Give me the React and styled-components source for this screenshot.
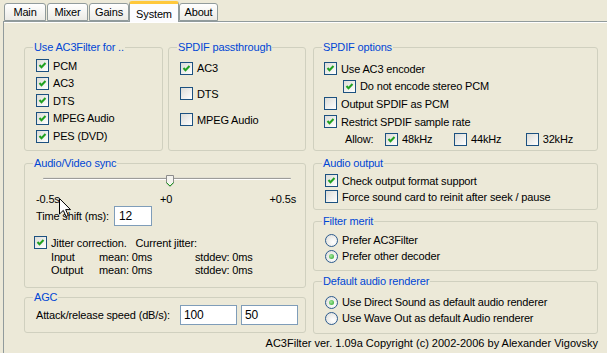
import React from "react";
import styled, { createGlobalStyle } from "styled-components";

const GlobalStyle = createGlobalStyle`
  html, body {
    margin: 0;
    padding: 0;
    background: #ece9d8;
  }
  body {
    font-family: "Liberation Sans", Arial, sans-serif;
    font-size: 11px;
    letter-spacing: -0.15px;
    color: #000;
  }
`;

const Window = styled.div`
  position: relative;
  width: 607px;
  height: 353px;
  overflow: hidden;
  box-sizing: border-box;
  padding-top: 1px;
  display: flex;
  flex-direction: column;
`;

const TabRow = styled.div`
  position: relative;
  z-index: 2;
  display: flex;
  align-items: flex-end;
  gap: 1px;
  height: 20px;
  padding-left: 4px;
`;

const Tab = styled.div`
  box-sizing: border-box;
  width: ${(p) => p.$w}px;
  height: ${(p) => (p.$active ? 21 : 18)}px;
  margin: ${(p) => (p.$active ? "0 -1px -1px" : "0")};
  display: flex;
  align-items: center;
  justify-content: center;
  padding-top: ${(p) => (p.$active ? 1 : 0)}px;
  border: 1px solid #919b9c;
  border-bottom: ${(p) => (p.$active ? "none" : "1px solid #919b9c")};
  border-top: ${(p) => (p.$active ? "3px solid #ffc83c" : "1px solid #919b9c")};
  border-radius: 3px 3px 0 0;
  background: ${(p) =>
    p.$active ? "#fcfcfe" : "linear-gradient(#ffffff, #ecebe6)"};
  white-space: nowrap;
`;

const Panel = styled.div`
  flex: 1;
  margin-left: 3px;
  border-left: 1px solid #919b9c;
  border-top: 1px solid #919b9c;
  box-shadow: inset 0 1px 0 #ffffff;
  padding: 25px 0 0 20px;
  background: #ece9d8;
`;

const Columns = styled.div`
  display: grid;
  grid-template-columns: 282px 285px;
  column-gap: 7px;
  align-items: start;
`;

const Column = styled.div`
  display: flex;
  flex-direction: column;
`;

const TopRow = styled.div`
  display: flex;
  gap: 5px;
`;

const Group = styled.div`
  position: relative;
  box-sizing: border-box;
  width: ${(p) => (p.$w ? `${p.$w}px` : "auto")};
  height: ${(p) => p.$h}px;
  margin-top: ${(p) => p.$mt || 0}px;
  padding: ${(p) => p.$pad};
  border: 1px solid #d0d0bf;
  border-radius: 3px;
  display: flex;
  flex-direction: column;
  gap: ${(p) => p.$gap || 0}px;
`;

const Legend = styled.span`
  position: absolute;
  top: -7px;
  left: 8px;
  padding: 0 1px;
  line-height: 13px;
  background: #ece9d8;
  color: #0046d5;
  white-space: nowrap;
`;

const Row = styled.div`
  display: flex;
  align-items: center;
  height: 13px;
  margin-left: ${(p) => p.$indent || 0}px;
  white-space: nowrap;
`;

const Box = styled.span`
  box-sizing: border-box;
  flex: none;
  width: 13px;
  height: 13px;
  border: 1px solid #1c5180;
  background: linear-gradient(135deg, #dcdcd7, #ffffff);
  display: flex;
  align-items: center;
  justify-content: center;
  margin-right: 4px;
`;

const Round = styled(Box)`
  border-radius: 50%;
  border-color: #2c5b8e;
  background: radial-gradient(circle at 65% 65%, #ffffff, #dcdcd7);
`;

const Dot = styled.span`
  width: 5px;
  height: 5px;
  border-radius: 50%;
  background: radial-gradient(circle at 40% 40%, #a8e8a0, #21a121);
`;

const Check = ({ on }) => (
  <Box>
    {on && (
      <svg width="11" height="11" viewBox="0 0 11 11">
        <polyline
          points="2.5,5 4.5,7.3 8.5,3"
          fill="none"
          stroke="#21a121"
          strokeWidth="2"
        />
      </svg>
    )}
  </Box>
);

const Radio = ({ on }) => <Round>{on && <Dot />}</Round>;

const CheckRow = ({ on, children, indent }) => (
  <Row $indent={indent}>
    <Check on={on} />
    <span>{children}</span>
  </Row>
);

const RadioRow = ({ on, children }) => (
  <Row>
    <Radio on={on} />
    <span>{children}</span>
  </Row>
);

const AllowLabel = styled.span`
  width: 40px;
  margin-left: 21px;
`;

const Option = styled.span`
  display: flex;
  align-items: center;
  width: ${(p) => p.$w}px;
`;

const Slider = styled.div`
  position: relative;
  margin: 0 0 0 18px;
  width: 248px;
  height: 12px;
`;

const Track = styled.div`
  position: absolute;
  left: 0;
  right: 0;
  top: 3px;
  height: 1px;
  border-radius: 1px;
  background: #9d9c99;
  border-bottom: 1px solid #ffffff;
  box-shadow: 0 -1px 0 #e2e0d4;
`;

const Thumb = styled.svg`
  position: absolute;
  top: 0;
`;

const Scale = styled.div`
  display: grid;
  grid-template-columns: 1fr auto 1fr;
  width: 260px;
  margin: 6px 0 0 11px;
  line-height: 13px;
  span:last-child {
    text-align: right;
  }
`;

const FieldRow = styled.div`
  display: flex;
  align-items: center;
  margin-left: ${(p) => p.$left}px;
  margin-top: ${(p) => p.$mt || 0}px;
  white-space: nowrap;
`;

const FieldLabel = styled.span`
  width: ${(p) => p.$w}px;
`;

const Input = styled.div`
  box-sizing: border-box;
  width: ${(p) => p.$w}px;
  height: 20px;
  margin-right: ${(p) => p.$mr || 0}px;
  padding-left: ${(p) => p.$pl || 3}px;
  border: 1px solid #7f9db9;
  background: #ffffff;
  display: flex;
  align-items: center;
  font-size: 12px;
`;

const JitterRow = styled(Row)`
  margin: 10px 0 0 9px;
`;

const JitterNote = styled.span`
  margin-left: 9px;
`;

const Stats = styled.div`
  display: grid;
  grid-template-columns: 48px 96px auto;
  margin: 2px 0 0 26px;
  line-height: 12.5px;
  white-space: nowrap;
`;

const Footer = styled.div`
  margin-top: 3px;
  padding-right: 9px;
  text-align: right;
  line-height: 13px;
  letter-spacing: 0;
  white-space: nowrap;
`;

const Cursor = styled.svg`
  position: absolute;
  left: 59px;
  top: 198px;
  z-index: 3;
`;

const tabs = [
  { name: "Main", w: 42 },
  { name: "Mixer", w: 41 },
  { name: "Gains", w: 40 },
  { name: "System", w: 50, active: true },
  { name: "About", w: 39 },
];

const shift = 12; // ms, range -500..500
const thumbLeft = ((shift + 500) / 1000) * 248 - 3.5;

export default function App() {
  return (
    <Window>
      <GlobalStyle />
      <TabRow>
        {tabs.map((t) => (
          <Tab key={t.name} $w={t.w} $active={t.active}>
            {t.name}
          </Tab>
        ))}
      </TabRow>
      <Panel>
        <Columns>
          <Column>
            <TopRow>
              <Group $w={139} $h={104} $pad="11px 0 0 11px" $gap={4.67}>
                <Legend>Use AC3Filter for ..</Legend>
                <CheckRow on>PCM</CheckRow>
                <CheckRow on>AC3</CheckRow>
                <CheckRow on>DTS</CheckRow>
                <CheckRow on>MPEG Audio</CheckRow>
                <CheckRow on>PES (DVD)</CheckRow>
              </Group>
              <Group $w={138} $h={104} $pad="13.7px 0 0 11px" $gap={12.8}>
                <Legend>SPDIF passthrough</Legend>
                <CheckRow on>AC3</CheckRow>
                <CheckRow>DTS</CheckRow>
                <CheckRow>MPEG Audio</CheckRow>
              </Group>
            </TopRow>
            <Group $h={125} $mt={12} $pad="11px 0 0 0">
              <Legend>Audio/Video sync</Legend>
              <Slider>
                <Track />
                <Thumb
                  width="8"
                  height="12"
                  viewBox="0 0 8 12"
                  style={{ left: thumbLeft }}
                >
                  <path
                    d="M0.5 0.5 H7.5 V8 L4 11.5 L0.5 8 Z"
                    fill="#f4f3ee"
                    stroke="#8c8c8c"
                  />
                  <path
                    d="M0.5 7.5 L4 11 L7.5 7.5"
                    fill="none"
                    stroke="#21a121"
                  />
                </Thumb>
              </Slider>
              <Scale>
                <span>-0.5s</span>
                <span>+0</span>
                <span>+0.5s</span>
              </Scale>
              <FieldRow $left={11}>
                <FieldLabel $w={78}>Time shift (ms):</FieldLabel>
                <Input $w={38} $pl={4}>
                  {shift}
                </Input>
              </FieldRow>
              <JitterRow>
                <Check on />
                <span>Jitter correction.</span>
                <JitterNote>Current jitter:</JitterNote>
              </JitterRow>
              <Stats>
                <span>Input</span>
                <span>mean: 0ms</span>
                <span>stddev: 0ms</span>
                <span>Output</span>
                <span>mean: 0ms</span>
                <span>stddev: 0ms</span>
              </Stats>
            </Group>
            <Group $h={36} $mt={9} $pad="7px 0 0 0">
              <Legend>AGC</Legend>
              <FieldRow $left={11}>
                <FieldLabel $w={144}>Attack/release speed (dB/s):</FieldLabel>
                <Input $w={57} $mr={4}>
                  100
                </Input>
                <Input $w={57}>50</Input>
              </FieldRow>
            </Group>
          </Column>
          <Column>
            <Group $h={104} $pad="14.3px 0 0 10px" $gap={4.6}>
              <Legend>SPDIF options</Legend>
              <CheckRow on>Use AC3 encoder</CheckRow>
              <CheckRow on indent={19}>
                Do not encode stereo PCM
              </CheckRow>
              <CheckRow>Output SPDIF as PCM</CheckRow>
              <CheckRow on>Restrict SPDIF sample rate</CheckRow>
              <Row>
                <AllowLabel>Allow:</AllowLabel>
                <Option $w={69}>
                  <Check on />
                  48kHz
                </Option>
                <Option $w={71.7}>
                  <Check />
                  44kHz
                </Option>
                <Option $w={60}>
                  <Check />
                  32kHz
                </Option>
              </Row>
            </Group>
            <Group $h={47} $mt={12} $pad="10px 0 0 11px" $gap={3}>
              <Legend>Audio output</Legend>
              <CheckRow on>Check output format support</CheckRow>
              <CheckRow>Force sound card to reinit after seek / pause</CheckRow>
            </Group>
            <Group $h={50} $mt={11} $pad="11.5px 0 0 11px" $gap={3}>
              <Legend>Filter merit</Legend>
              <RadioRow>Prefer AC3Filter</RadioRow>
              <RadioRow on>Prefer other decoder</RadioRow>
            </Group>
            <Group $h={53} $mt={10} $pad="13.5px 0 0 11px" $gap={3}>
              <Legend>Default audio renderer</Legend>
              <RadioRow on>Use Direct Sound as default audio renderer</RadioRow>
              <RadioRow>Use Wave Out as default Audio renderer</RadioRow>
            </Group>
          </Column>
        </Columns>
        <Footer>
          AC3Filter ver. 1.09a Copyright (c) 2002-2006 by Alexander Vigovsky
        </Footer>
      </Panel>
      <Cursor width="13" height="20" viewBox="0 0 13 20">
        <path
          d="M0.5 0.5 V16 L4.3 12.4 L7 18.5 L9.3 17.5 L6.7 11.6 H11.5 Z"
          fill="#ffffff"
          stroke="#000000"
          strokeLinejoin="miter"
        />
      </Cursor>
    </Window>
  );
}
